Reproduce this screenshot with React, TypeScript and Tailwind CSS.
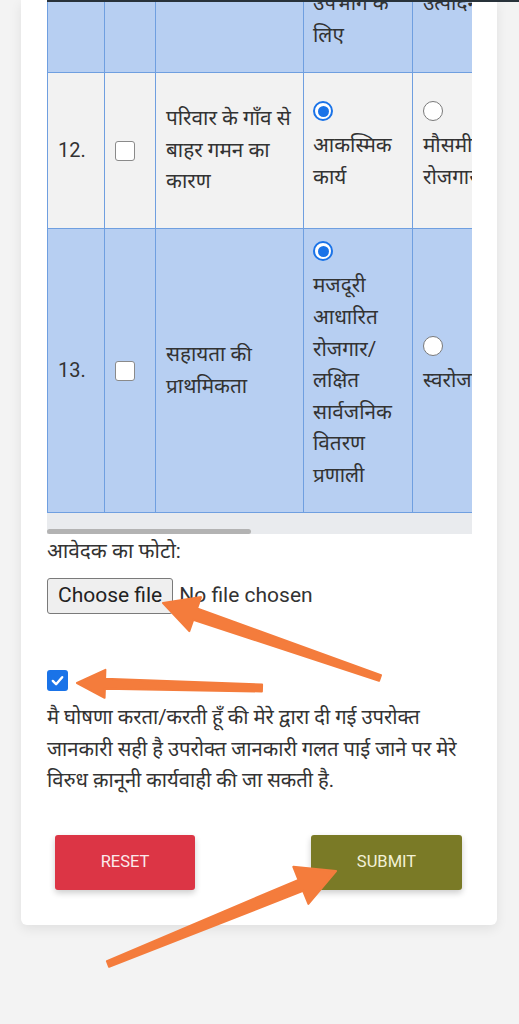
import React from "react";

type P = [number, number];

function arrowPoints(tail: P, tip: P, headLen: number, headHalf: number, neckHalf: number, tailHalf: number) {
  const dx = tip[0] - tail[0];
  const dy = tip[1] - tail[1];
  const L = Math.hypot(dx, dy);
  const ux = dx / L;
  const uy = dy / L;
  const nx = -uy;
  const ny = ux;
  const bx = tip[0] - ux * headLen;
  const by = tip[1] - uy * headLen;
  const pts: P[] = [
    [tail[0] + nx * tailHalf, tail[1] + ny * tailHalf],
    [bx + nx * neckHalf, by + ny * neckHalf],
    [bx + nx * headHalf, by + ny * headHalf],
    tip,
    [bx - nx * headHalf, by - ny * headHalf],
    [bx - nx * neckHalf, by - ny * neckHalf],
    [tail[0] - nx * tailHalf, tail[1] - ny * tailHalf],
  ];
  return pts.map((p) => `${p[0].toFixed(1)},${p[1].toFixed(1)}`).join(" ");
}

function Radio({ checked }: { checked?: boolean }) {
  if (checked) {
    return (
      <div className="w-[20px] h-[20px] rounded-full border-2 border-[#1a73e8] bg-white flex items-center justify-center">
        <div className="w-[11px] h-[11px] rounded-full bg-[#1a73e8]" />
      </div>
    );
  }
  return <div className="w-[20px] h-[20px] rounded-full border-[1.5px] border-[#7a7a7a] bg-white" />;
}

function Box() {
  return <div className="w-[20px] h-[20px] rounded-[3px] border-[1.5px] border-[#8a8a8a] bg-white" />;
}

function Lines({ lines }: { lines: string[] }) {
  return (
    <div>
      {lines.map((l, i) => (
        <div key={i} className="whitespace-nowrap">
          {l}
        </div>
      ))}
    </div>
  );
}

function Option({ checked, lines }: { checked?: boolean; lines: string[] }) {
  return (
    <div className="flex flex-col">
      <Radio checked={checked} />
      <div className="mt-[9px]">
        <Lines lines={lines} />
      </div>
    </div>
  );
}

export default function App() {
  const blue = "bg-[#b7cff2]";
  const gray = "bg-[#f2f2f2]";
  return (
    <div
      className="relative min-h-[1024px] w-full overflow-hidden bg-[#f3f3f3] text-[#333333]"
      style={{ fontFamily: 'Roboto, "Noto Sans", "Noto Sans Devanagari", sans-serif' }}
    >
      <div className="ml-[21px] w-[476px] bg-white rounded-b-[6px] shadow-[0_4px_12px_rgba(0,0,0,0.08)] pb-[35px]">
        <div className="px-[26px]">
          {/* table scroll area */}
          <div className="w-[425px] overflow-hidden bg-[#e9ebee]">
            <div className="w-max grid grid-cols-[56px_50px_147px_108px_140px] gap-px pl-px pb-px bg-[#6f9fe0] text-[20.7px] leading-[31.6px]">
              {/* header partial row */}
              <div className={`${blue} h-[72px]`} />
              <div className={`${blue} h-[72px]`} />
              <div className={`${blue} h-[72px]`} />
              <div className={`${blue} h-[72px] overflow-hidden pl-[9px]`}>
                <div className="-mt-[12px]">
                  <Lines lines={["उपभोग के", "लिए"]} />
                </div>
              </div>
              <div className={`${blue} h-[72px] overflow-hidden pl-[10px]`}>
                <div className="-mt-[12px]">
                  <Lines lines={["उत्पादन हेतु"]} />
                </div>
              </div>

              {/* row 12 */}
              <div className={`${gray} h-[155px] flex items-center pl-[10px] text-[20px]`}>12.</div>
              <div className={`${gray} h-[155px] flex items-center pl-[10px]`}>
                <Box />
              </div>
              <div className={`${gray} h-[155px] flex items-center pl-[10px]`}>
                <Lines lines={["परिवार के गाँव से", "बाहर गमन का", "कारण"]} />
              </div>
              <div className={`${gray} h-[155px] flex items-center pl-[9px] pb-[6px]`}>
                <Option checked lines={["आकस्मिक", "कार्य"]} />
              </div>
              <div className={`${gray} h-[155px] flex items-center pl-[10px] pb-[6px]`}>
                <Option lines={["मौसमी", "रोजगार"]} />
              </div>

              {/* row 13 */}
              <div className={`${blue} h-[283px] flex items-center pl-[10px] text-[20px]`}>13.</div>
              <div className={`${blue} h-[283px] flex items-center pl-[10px]`}>
                <Box />
              </div>
              <div className={`${blue} h-[283px] flex items-center pl-[10px]`}>
                <Lines lines={["सहायता की", "प्राथमिकता"]} />
              </div>
              <div className={`${blue} h-[283px] flex items-center pl-[9px] pb-[8px]`}>
                <Option
                  checked
                  lines={["मजदूरी", "आधारित", "रोजगार/", "लक्षित", "सार्वजनिक", "वितरण", "प्रणाली"]}
                />
              </div>
              <div className={`${blue} h-[283px] flex items-center pl-[10px] pb-[8px]`}>
                <Option lines={["स्वरोजगार"]} />
              </div>
            </div>
            <div className="h-[21px] flex flex-col justify-end">
              <div className="w-[204px] h-[5px] rounded-full bg-[#b3b3b3]" />
            </div>
          </div>

          <div className="text-[20.8px] leading-[32px] mt-px">आवेदक का फोटो:</div>

          <div className="mt-[11px] flex items-center text-[21px]">
            <div className="h-[36px] px-[10px] flex items-center rounded-[3px] border border-[#7a7a7a] bg-[#efefef] text-[#222]">
              Choose file
            </div>
            <span className="ml-[6px] text-[#333]">No file chosen</span>
          </div>

          <div className="mt-[56px] w-[21px] h-[21px] rounded-[3px] bg-[#1a73e8] flex items-center justify-center">
            <svg width="15" height="15" viewBox="0 0 16 16">
              <path d="M3 8.5 L6.5 12 L13 4.5" fill="none" stroke="white" strokeWidth="2.6" strokeLinecap="round" strokeLinejoin="round" />
            </svg>
          </div>

          <p className="mt-[11px] text-[20.2px] leading-[31.6px] text-[#333]">
            मै घोषणा करता/करती हूँ की मेरे द्वारा दी गई उपरोक्त जानकारी सही है उपरोक्त जानकारी गलत पाई जाने पर मेरे विरुध क़ानूनी कार्यवाही की जा सकती है.
          </p>

          <div className="mt-[38px] flex justify-between px-[8px] pr-[9px]">
            <button className="w-[140px] h-[55px] rounded-[3px] bg-[#dc3545] text-[#fbe9eb] text-[16.5px] shadow-[0_3px_6px_rgba(0,0,0,0.2)]">
              RESET
            </button>
            <button className="w-[151px] h-[55px] rounded-[3px] bg-[#7a7a26] text-[#f3f1d6] text-[16.5px] shadow-[0_3px_6px_rgba(0,0,0,0.2)]">
              SUBMIT
            </button>
          </div>
        </div>
      </div>

      {/* top dark edge */}
      <div className="absolute top-0 left-[47px] right-0 h-[2px] bg-[#28323a]" />

      {/* annotation arrows */}
      <svg className="absolute inset-0 pointer-events-none" width="519" height="1024" viewBox="0 0 519 1024">
        <g fill="#f47c3c" stroke="#f47c3c" strokeWidth="2" strokeLinejoin="round">
          <polygon points={arrowPoints([380, 678], [163, 603], 34, 18, 6, 3)} />
          <polygon points={arrowPoints([262, 688], [77, 683], 28, 14, 5, 3.5)} />
          <polygon points={arrowPoints([108, 964], [336, 871], 38, 20, 6, 3)} />
        </g>
      </svg>
    </div>
  );
}
